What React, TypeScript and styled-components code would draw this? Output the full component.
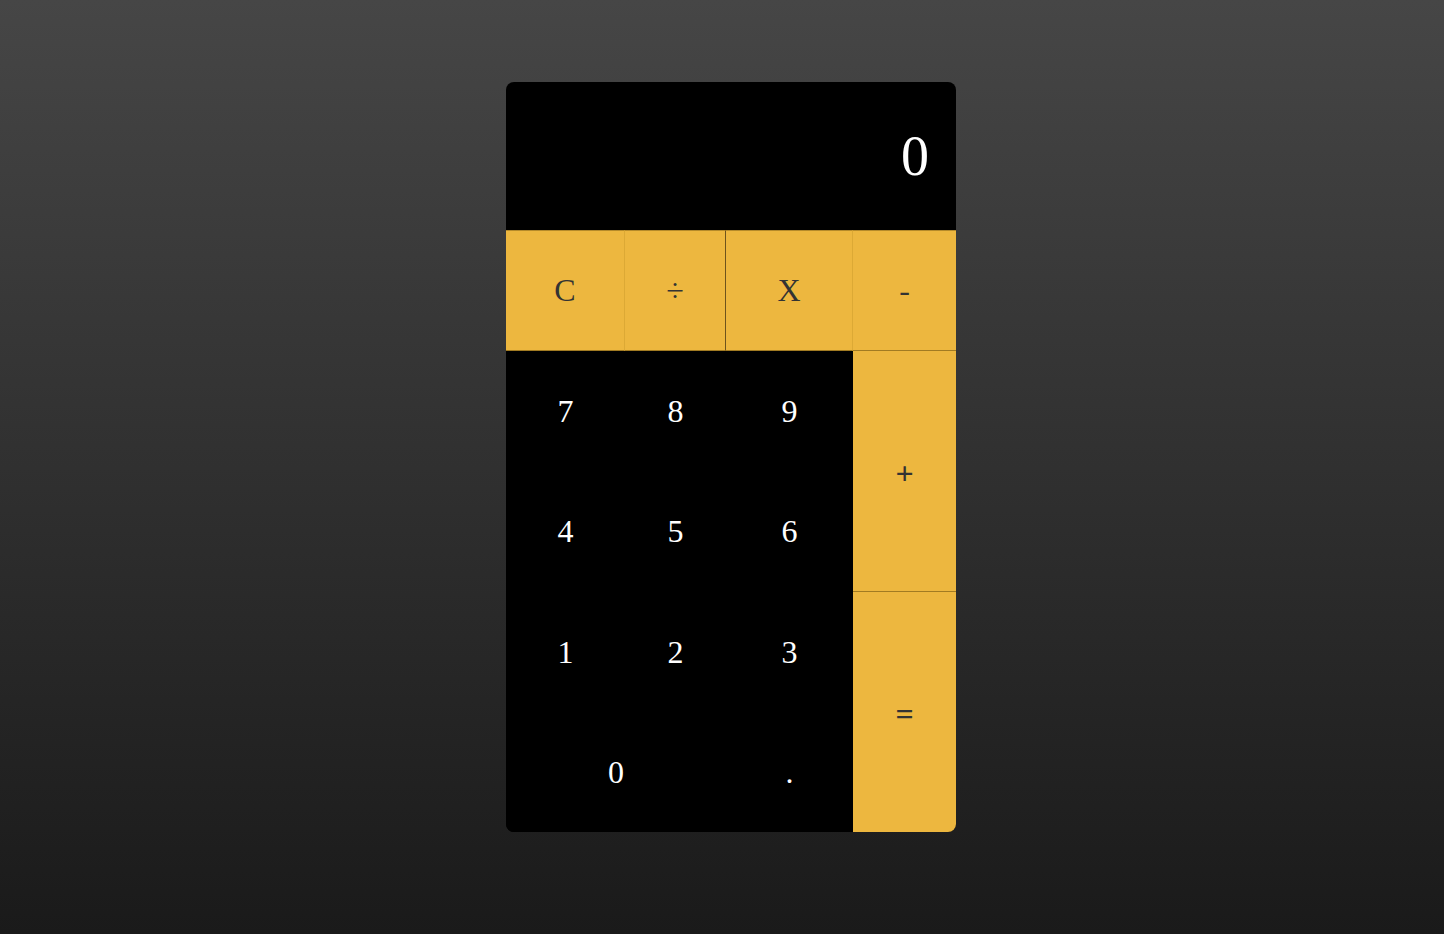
import { type FC } from "react";
import styled, { createGlobalStyle } from "styled-components";

const GlobalStyle = createGlobalStyle`
  html, body {
    margin: 0;
    padding: 0;
  }
  body {
    min-height: 100vh;
    background: linear-gradient(180deg, #464646 0%, #1a1a1a 100%);
    font-family: "Liberation Serif", "Times New Roman", serif;
  }
`;

const Page = styled.div`
  display: flex;
  align-items: flex-start;
  justify-content: center;
  padding: 82px 0 0 18px;
  min-height: 100vh;
  box-sizing: border-box;
`;

const Calculator = styled.div`
  display: grid;
  grid-template-columns: 119px 101px 127px 103px;
  grid-template-rows: 148px 121px 120px 121px 120px 120px;
  width: 450px;
  background: #000;
  border-radius: 8px;
  overflow: hidden;
`;

const Display = styled.div`
  grid-column: 1 / 5;
  display: flex;
  align-items: center;
  justify-content: flex-end;
  padding-right: 27px;
  color: #fff;
  font-size: 56px;
`;

type KeyProps = {
  $op?: boolean;
  $tall?: boolean;
  $span?: string;
  $row?: string;
  $top?: string;
  $right?: string;
  $bottom?: string;
};

const Key = styled.button<KeyProps>`
  display: flex;
  align-items: center;
  justify-content: center;
  margin: 0;
  padding: ${(p) => (p.$tall ? "5px 0 0" : "0")};
  border: none;
  box-sizing: border-box;
  font-family: "Liberation Serif", "Times New Roman", serif;
  font-size: 32px;
  font-weight: ${(p) => (p.$tall ? 700 : 400)};
  cursor: pointer;
  background: ${(p) => (p.$op ? "#edb73f" : "#000")};
  color: ${(p) => (p.$op ? "#333" : "#fff")};
  grid-column: ${(p) => p.$span ?? "auto"};
  grid-row: ${(p) => p.$row ?? "auto"};
  border-top: ${(p) => (p.$top ? `1px solid ${p.$top}` : "none")};
  border-right: ${(p) => (p.$right ? `1px solid ${p.$right}` : "none")};
  border-bottom: ${(p) => (p.$bottom ? `1px solid ${p.$bottom}` : "none")};
`;

const TOP_LINE = "#b58a2a";
const ROW_LINE = "#a27b22";
const FAINT = "#dca935";
const DARK = "#6e531c";

const App: FC = () => (
  <>
    <GlobalStyle />
    <Page>
      <Calculator>
        <Display>0</Display>

        <Key $op $top={TOP_LINE} $bottom={ROW_LINE} $right={FAINT}>
          C
        </Key>
        <Key $op $top={TOP_LINE} $bottom={ROW_LINE} $right={DARK}>
          ÷
        </Key>
        <Key $op $top={TOP_LINE} $bottom={ROW_LINE} $right={FAINT}>
          X
        </Key>
        <Key $op $top={TOP_LINE} $bottom={ROW_LINE}>
          -
        </Key>

        <Key>7</Key>
        <Key>8</Key>
        <Key>9</Key>
        <Key $op $tall $span="4" $row="3 / 5" $bottom={ROW_LINE}>
          +
        </Key>

        <Key>4</Key>
        <Key>5</Key>
        <Key>6</Key>

        <Key>1</Key>
        <Key>2</Key>
        <Key>3</Key>
        <Key $op $tall $span="4" $row="5 / 7">
          =
        </Key>

        <Key $span="1 / 3">0</Key>
        <Key>.</Key>
      </Calculator>
    </Page>
  </>
);

export default App;
